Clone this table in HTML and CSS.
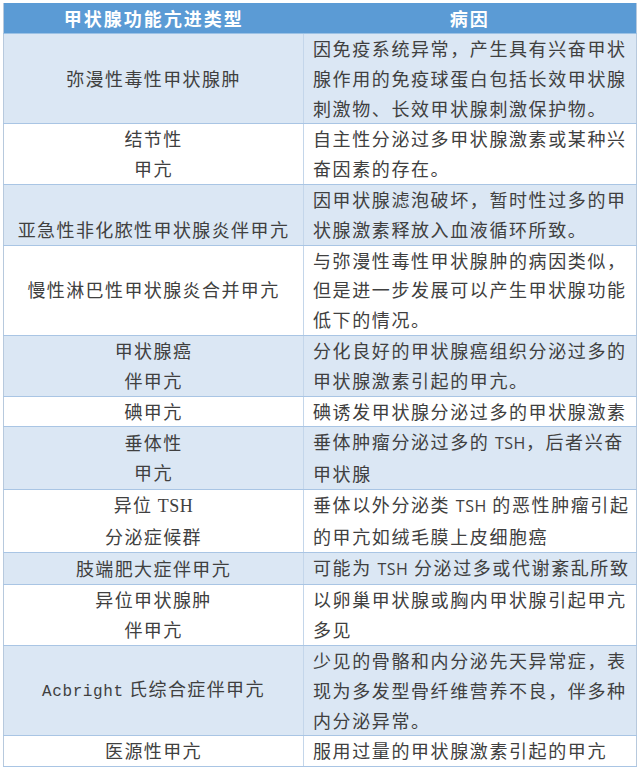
FILE: index.html
```html
<!DOCTYPE html>
<html lang="zh-CN">
<head>
<meta charset="utf-8">
<title>甲状腺功能亢进类型</title>
<link rel="stylesheet" href="styles.css">
</head>
<body>
<table class="tbl">
  <colgroup><col class="c1"><col class="c2"></colgroup>
  <thead>
    <tr><th>甲状腺功能亢进类型</th><th class="h2">病因</th></tr>
  </thead>
  <tbody>
    <tr class="alt"><td class="k">弥漫性毒性甲状腺肿</td><td class="v">因免疫系统异常，产生具有兴奋甲状<br>腺作用的免疫球蛋白包括长效甲状腺<br>刺激物、长效甲状腺刺激保护物。</td></tr>
    <tr><td class="k">结节性<br>甲亢</td><td class="v">自主性分泌过多甲状腺激素或某种兴<br>奋因素的存在。</td></tr>
    <tr class="alt"><td class="k bottom">亚急性非化脓性甲状腺炎伴甲亢</td><td class="v">因甲状腺滤泡破坏，暂时性过多的甲<br>状腺激素释放入血液循环所致。</td></tr>
    <tr><td class="k">慢性淋巴性甲状腺炎合并甲亢</td><td class="v">与弥漫性毒性甲状腺肿的病因类似，<br>但是进一步发展可以产生甲状腺功能<br>低下的情况。</td></tr>
    <tr class="alt"><td class="k">甲状腺癌<br>伴甲亢</td><td class="v">分化良好的甲状腺癌组织分泌过多的<br>甲状腺激素引起的甲亢。</td></tr>
    <tr><td class="k">碘甲亢</td><td class="v">碘诱发甲状腺分泌过多的甲状腺激素</td></tr>
    <tr class="alt"><td class="k">垂体性<br>甲亢</td><td class="v">垂体肿瘤分泌过多的 <span class="lat">TSH</span>，后者兴奋<br>甲状腺</td></tr>
    <tr><td class="k">异位 <span class="ser">TSH</span><br>分泌症候群</td><td class="v">垂体以外分泌类 <span class="lat">TSH</span> 的恶性肿瘤引起<br>的甲亢如绒毛膜上皮细胞癌</td></tr>
    <tr class="alt"><td class="k">肢端肥大症伴甲亢</td><td class="v">可能为 <span class="lat">TSH</span> 分泌过多或代谢紊乱所致</td></tr>
    <tr><td class="k">异位甲状腺肿<br>伴甲亢</td><td class="v">以卵巢甲状腺或胸内甲状腺引起甲亢<br>多见</td></tr>
    <tr class="alt"><td class="k"><span class="mono">Acbright</span> 氏综合症伴甲亢</td><td class="v">少见的骨骼和内分泌先天异常症，表<br>现为多发型骨纤维营养不良，伴多种<br>内分泌异常。</td></tr>
    <tr><td class="k">医源性甲亢</td><td class="v">服用过量的甲状腺激素引起的甲亢</td></tr>
  </tbody>
</table>
</body>
</html>
```

FILE: styles.css
```css
html, body {
  margin: 0;
  padding: 0;
  background: #ffffff;
}

body {
  font-family: "Noto Sans CJK SC", "Noto Sans", sans-serif;
  color: #404040;
}

.tbl {
  margin: 3px 0 0 3px;
  width: 633px;
  border-collapse: collapse;
  table-layout: fixed;
  border-left: 1px solid #b7c9dd;
  border-right: 1px solid #b7c9dd;
}

.c1 { width: 300px; }
.c2 { width: 333px; }

.tbl th {
  background: #5b9bd5;
  color: #ffffff;
  font-weight: 700;
  font-size: 18px;
  letter-spacing: 2px;
  line-height: 30px;
  height: 30px;
  padding: 0;
  text-align: center;
  border-bottom: 1px solid #9cc2e5;
}

.tbl td {
  padding: 0;
  font-size: 18px;
  line-height: 29.8px;
  letter-spacing: 1.4px;
  vertical-align: middle;
  border-bottom: 1px solid #a9c5e4;
  white-space: nowrap;
  font-weight: 400;
}

.tbl tr.alt td {
  background: #dbe7f4;
}

.tbl td.k {
  text-align: center;
  border-right: 1px solid #c4d6ea;
}

.tbl td.v {
  text-align: left;
  padding-left: 9px;
  letter-spacing: 1.6px;
}

.tbl td.bottom {
  vertical-align: bottom;
}

.lat {
  font-family: "Open Sans", "Liberation Sans", sans-serif;
  font-size: 16px;
  letter-spacing: 0.5px;
}

.ser {
  font-family: "Liberation Serif", serif;
  font-size: 18px;
  letter-spacing: 0.5px;
}

.mono {
  font-family: "Liberation Mono", monospace;
  font-size: 16px;
  letter-spacing: 0.6px;
}
```
